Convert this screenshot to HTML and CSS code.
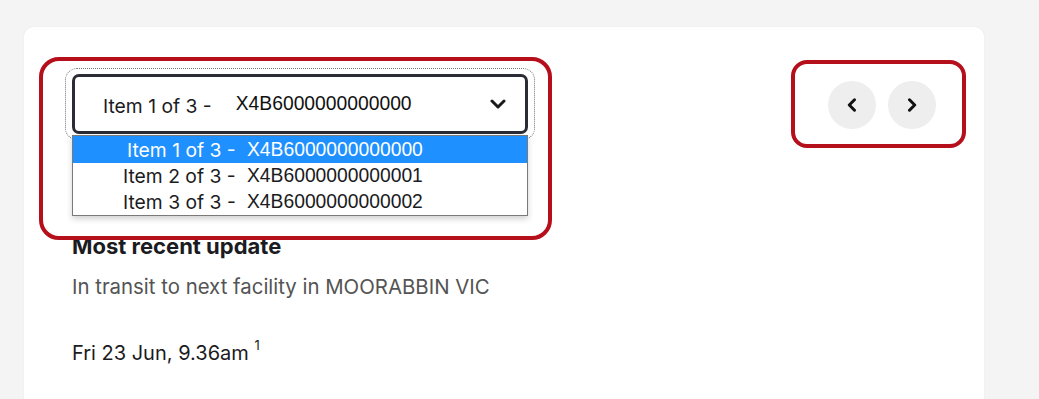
FILE: index.html
```html
<!DOCTYPE html>
<html lang="en">
<head>
<meta charset="utf-8">
<title>Tracking</title>
<link rel="stylesheet" href="styles.css">
</head>
<body>
<main class="card">
  <div class="header">
    <div class="picker">
      <div class="select">
        <span class="select-label">Item 1 of 3 -</span>
        <span class="select-id">X4B6000000000000</span>
        <svg class="select-chevron" width="16" height="10" viewBox="0 0 16 10"><path d="M2 2 L8 8 L14 2" fill="none" stroke="#1a1a1a" stroke-width="3" stroke-linecap="round" stroke-linejoin="round"/></svg>
      </div>
      <ul class="options">
        <li class="option option-active"><span class="opt-label">Item 1 of 3 -</span><span class="opt-id">X4B6000000000000</span></li>
        <li class="option"><span class="opt-label">Item 2 of 3 -</span><span class="opt-id">X4B6000000000001</span></li>
        <li class="option"><span class="opt-label">Item 3 of 3 -</span><span class="opt-id">X4B6000000000002</span></li>
      </ul>
      <div class="annot annot-picker"></div>
    </div>
    <div class="nav">
      <button class="nav-btn" aria-label="Previous">
        <svg width="12" height="14" viewBox="0 0 12 14"><path d="M8.5 1.8 L3.3 7 L8.5 12.2" fill="none" stroke="#111" stroke-width="3" stroke-linecap="round" stroke-linejoin="round"/></svg>
      </button>
      <button class="nav-btn" aria-label="Next">
        <svg width="12" height="14" viewBox="0 0 12 14"><path d="M3.5 1.8 L8.7 7 L3.5 12.2" fill="none" stroke="#111" stroke-width="3" stroke-linecap="round" stroke-linejoin="round"/></svg>
      </button>
      <div class="annot annot-nav"></div>
    </div>
  </div>
  <h2 class="update-title">Most recent update</h2>
  <p class="update-text">In transit to next facility in MOORABBIN VIC</p>
  <p class="update-date">Fri 23 Jun, 9.36am <sup class="note">1</sup></p>
</main>
</body>
</html>
```

FILE: styles.css
```css
* { box-sizing: border-box; }

html, body {
  margin: 0;
  height: 100%;
}

body {
  background: #f4f4f4;
  padding: 27px 55px 0 24px;
  font-family: Inter, "Noto Sans", Arial, sans-serif;
  color: #1b1b22;
  overflow: hidden;
}

.card {
  width: 960px;
  height: 372px;
  background: #ffffff;
  border-radius: 9px 9px 0 0;
  box-shadow: 0 0 1px rgba(0,0,0,0.12);
  padding: 47px 48px 0 48px;
}

.header {
  display: flex;
  justify-content: space-between;
  align-items: center;
  height: 60px;
}

.picker {
  position: relative;
  width: 456px;
  height: 60px;
}

.select {
  position: relative;
  display: flex;
  align-items: center;
  height: 60px;
  border: 3px solid #2b2b36;
  border-radius: 7px;
  padding: 0 19px 0 28px;
  background: #fff;
}

.select::before {
  content: "";
  position: absolute;
  left: -10px;
  top: -9px;
  right: -10px;
  bottom: -9px;
  border: 1px dotted #777;
  border-radius: 12px;
}

.select-label {
  font-size: 19.3px;
  color: #1b1b22;
  padding-top: 4px;
}

.select-id {
  font-family: "Liberation Sans", Arial, sans-serif;
  font-size: 19.3px;
  color: #111;
  margin-left: 24px;
}

.select-chevron {
  margin-left: auto;
}

.options {
  position: absolute;
  left: 0;
  top: 61px;
  width: 456px;
  margin: 0;
  padding: 0;
  list-style: none;
  background: #fff;
  border: 1px solid #7a7a7a;
  box-shadow: 0 3px 6px rgba(0,0,0,0.18);
  z-index: 2;
}

.option {
  display: flex;
  align-items: center;
  height: 26px;
  padding-left: 50px;
  color: #1b1b22;
}

.option-active {
  background: #1e90ff;
  color: #fff;
  height: 27px;
  padding-left: 54px;
}

.opt-label {
  font-size: 19.3px;
  width: 124px;
}

.option-active .opt-label {
  width: 120px;
}

.opt-id {
  font-family: "Liberation Sans", Arial, sans-serif;
  font-size: 19.3px;
}

.annot {
  position: absolute;
  border: 4px solid #b50f1c;
  pointer-events: none;
  z-index: 3;
}

.annot-picker {
  left: -33px;
  top: -17px;
  width: 513px;
  height: 183px;
  border-radius: 20px;
}

.nav {
  position: relative;
  display: flex;
  gap: 12px;
  margin-top: 2px;
}

.nav-btn {
  width: 48px;
  height: 48px;
  border-radius: 50%;
  border: none;
  background: #eeeeee;
  display: flex;
  align-items: center;
  justify-content: center;
  padding: 0;
}

.annot-nav {
  left: -37px;
  top: -21px;
  width: 175px;
  height: 88px;
  border-radius: 16px;
}

.update-title {
  margin: 99px 0 0;
  font-size: 22px;
  line-height: 26px;
  font-weight: 700;
  color: #1b1b22;
}

.update-text {
  margin: 16px 0 0;
  font-size: 20.4px;
  line-height: 24px;
  color: #545454;
}

.update-date {
  margin: 36px 0 0;
  font-size: 20px;
  line-height: 24px;
  color: #1b1b22;
}

.note {
  font-size: 13px;
  position: relative;
  top: -2px;
}
```
